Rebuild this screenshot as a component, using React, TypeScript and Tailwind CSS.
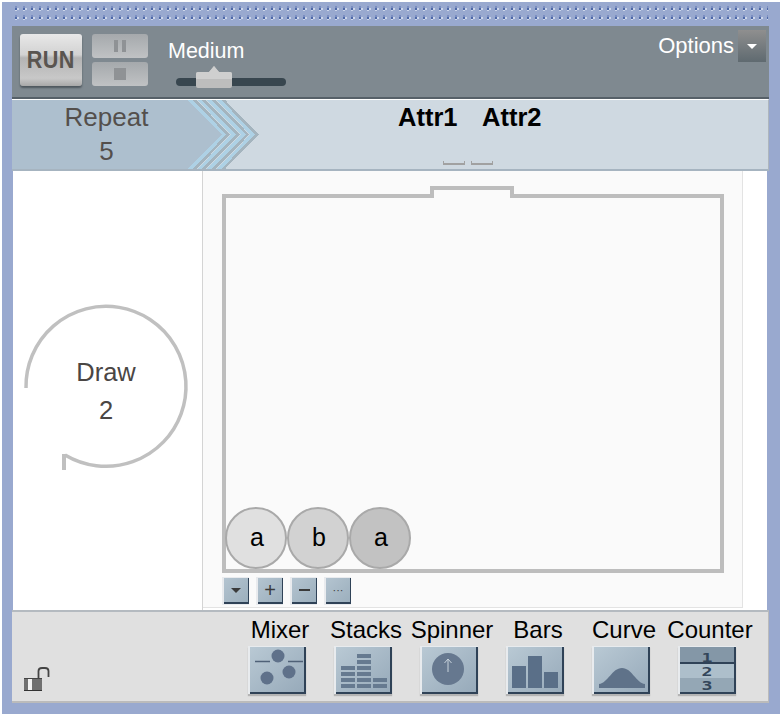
import type { ReactNode } from "react";

const FONT = { fontFamily: '"Liberation Sans", Arial, sans-serif' };
const MONO = { fontFamily: '"DejaVu Sans Mono", monospace' };

function IconTile({ children }: { children: ReactNode }) {
  return (
    <div className="w-[58px] h-[48px] bg-[#e8ebee] pl-[2px] pt-[1px] shadow-[0_2px_1px_#b4b4b4]">
      <div className="w-[56px] h-[47px] bg-gradient-to-br from-[#b9c9d4] to-[#97aaba] border-r-2 border-b-2 border-[#2f4257] overflow-hidden">
        {children}
      </div>
    </div>
  );
}

const tools: [string, ReactNode][] = [
  [
    "Mixer",
    <svg key="m" width="54" height="45" fill="#5f718a">
      <path d="M5 14.5H20M38 14.5H53" stroke="#4f6177" strokeWidth="1.5" />
      <circle cx="28" cy="9" r="6.5" />
      <circle cx="17" cy="31" r="6.5" />
      <circle cx="39" cy="25" r="6.5" />
    </svg>,
  ],
  [
    "Stacks",
    <svg key="s" width="54" height="45" fill="#667a90">
      {[
        [21, 7],
        [21, 13],
        [21, 19],
        [21, 25],
        [21, 31],
        [21, 37],
        [5, 19],
        [5, 25],
        [5, 31],
        [5, 37],
        [37, 31],
        [37, 37],
      ].map(([x, y]) => (
        <rect key={`${x}-${y}`} x={x} y={y} width="14" height="4" />
      ))}
    </svg>,
  ],
  [
    "Spinner",
    <svg key="p" width="54" height="45">
      <circle cx="26" cy="22" r="16" fill="#66788f" />
      <path d="M26 25V12M22.5 16L26 12L29.5 16" stroke="#c8d3dc" strokeWidth="1" fill="none" />
    </svg>,
  ],
  [
    "Bars",
    <svg key="b" width="54" height="45" fill="#5a6f88">
      <rect x="4" y="19" width="14" height="22" />
      <rect x="20" y="9" width="14" height="32" />
      <rect x="36" y="25" width="14" height="16" />
    </svg>,
  ],
  [
    "Curve",
    <svg key="c" width="54" height="45" fill="#5f7289">
      <path d="M5 41V37C14 36 18 21 28 21C38 21 42 36 51 37V41Z" />
    </svg>,
  ],
  [
    "Counter",
    <svg key="k" width="54" height="45" style={MONO}>
      <rect width="54" height="15" fill="#8497a7" />
      <rect y="17" width="54" height="14" fill="#adbfcb" />
      <rect y="31" width="54" height="14" fill="#94a7b5" />
      <text x="27" y="15" textAnchor="middle" fontSize="13" fontWeight="700" fill="#33465a" textLength="11" lengthAdjust="spacingAndGlyphs">1</text>
      <rect y="15" width="54" height="2" fill="#2f4257" />
      <text x="27" y="29" textAnchor="middle" fontSize="13" fontWeight="700" fill="#33465a" textLength="11" lengthAdjust="spacingAndGlyphs">2</text>
      <text x="27" y="43" textAnchor="middle" fontSize="13" fontWeight="700" fill="#33465a" textLength="11" lengthAdjust="spacingAndGlyphs">3</text>
    </svg>,
  ],
];

function MiniButton({ children }: { children: ReactNode }) {
  return (
    <div className="w-[27px] h-[28px] bg-[#e9ebee] pl-[2px] pt-[1px]">
      <div className="w-[25px] h-[26px] flex items-center justify-center bg-gradient-to-br from-[#b4c4d0] to-[#9cafbd] border-r border-b-2 border-[#2f4257]">
        {children}
      </div>
    </div>
  );
}

function Ball({ label, color }: { label: string; color: string }) {
  return (
    <div
      className="w-[62px] h-[62px] rounded-full border-2 border-[#a9a9a9] flex items-center justify-center pl-[2px] text-[25px] text-black shrink-0"
      style={{ backgroundColor: color }}
    >
      {label}
    </div>
  );
}

export default function App() {
  return (
    <div className="w-[782px] h-[716px] bg-white p-[2px]" style={FONT}>
      <div className="w-[778px] h-[712px] bg-[#99a9cf] flex flex-col">
        {/* dotted band */}
        <div className="h-[24px] pt-[4px] pl-[12px] flex flex-col gap-[3px] overflow-hidden">
          {[0, 1].map((r) => (
            <svg key={r} width="754" height="6" className="block" shapeRendering="crispEdges">
              <defs>
                <pattern id={`dots${r}`} width="8" height="6" patternUnits="userSpaceOnUse">
                  <rect x="1" y="0" width="2" height="2" fill="#7c8fc2" />
                  <rect x="1" y="2" width="2" height="2" fill="#4d68a8" />
                  <rect x="3" y="2" width="2" height="2" fill="#cdd6ea" />
                  <rect x="1" y="4" width="2" height="1" fill="#cdd6ea" />
                </pattern>
              </defs>
              <rect width="754" height="6" fill={`url(#dots${r})`} />
            </svg>
          ))}
        </div>

        <div className="ml-[10px] w-[757px] flex flex-col h-[677px]">
          {/* Control bar */}
          <div className="h-[73px] bg-[#7f8990] border-b-2 border-[#566068] flex shrink-0">
            <div className="ml-[8px] mt-[8px] w-[62px] h-[52px] rounded-[3px] bg-[linear-gradient(#e8e8e8_0%,#d2d2d2_40%,#b4b4b4_46%,#c8c8c8_85%,#a8a8a8_100%)] shadow-[0_2px_2px_#4f585e] flex items-center justify-center">
              <span className="text-[24px] font-bold text-[#5a5550] scale-x-90 tracking-[0.5px]">RUN</span>
            </div>
            <div className="ml-[10px] mt-[8px] flex flex-col gap-[4px]">
              <div className="w-[56px] h-[24px] rounded-[3px] bg-gradient-to-b from-[#a5a9ac] to-[#c0c2c4] flex items-center justify-center gap-[4px]">
                <div className="w-[4px] h-[12px] bg-[#8f9295]" />
                <div className="w-[4px] h-[12px] bg-[#8f9295]" />
              </div>
              <div className="w-[56px] h-[24px] rounded-[3px] bg-gradient-to-b from-[#a5a9ac] to-[#c0c2c4] flex items-center justify-center">
                <div className="w-[12px] h-[12px] bg-[#8f9295]" />
              </div>
            </div>
            <div className="ml-[20px] flex flex-col">
              <span className="text-[21.5px] leading-[24px] mt-[13px] text-white">Medium</span>
              <div className="relative w-[110px] h-[8px] ml-[8px] mt-[15px] rounded-full bg-[#38464f]">
                <svg className="absolute left-[20px] -top-[12px]" width="36" height="24">
                  <path d="M0 8Q0 6 2 6H13L18 0L23 6H34Q36 6 36 8V20Q36 22 34 22H2Q0 22 0 20Z" fill="#bdbdbd" />
                  <path d="M0 8Q0 6 2 6H13L18 0L23 6H34Q36 6 36 8V13H0Z" fill="#cfcfcf" />
                </svg>
              </div>
            </div>
            <div className="ml-auto mr-[3px] mt-[4px] flex items-start">
              <span className="text-[22px] leading-[26px] text-white mt-[3px]">Options</span>
              <div className="ml-[4px] w-[28px] h-[32px] bg-gradient-to-b from-[#8f8f8f] to-[#5f6a70] flex items-center justify-center">
                <div className="w-0 h-0 border-l-[5px] border-r-[5px] border-t-[5px] border-l-transparent border-r-transparent border-t-white" />
              </div>
            </div>
          </div>

          {/* Attribute bar */}
          <div className="h-[72px] border-t border-t-white bg-[#cfd9e1] border-b-2 border-b-[#a6b4c0] border-r border-r-[#aeb6bd] flex shrink-0 relative">
            <div className="w-[176px] h-full bg-[#adbfce] flex flex-col items-center text-[#544f4c] text-[26px] leading-[34px] pl-[13px]">
              <span>Repeat</span>
              <span>5</span>
            </div>
            <svg className="absolute left-[175px] top-0" width="76" height="69" fill="none" shapeRendering="crispEdges">
              <path d="M0 0H3L37 34L3 69H0Z" fill="#adbfce" />
              {[0, 1, 2, 3].map((k) => {
                const b = 2 + k * 9.6;
                const g = 6 + k * 9.6;
                return (
                  <g key={k}>
                    <path d={`M${g} -1L${g + 35} 34.5L${g} 70`} stroke="#a4b4be" strokeWidth="3.2" />
                    <path d={`M${b} -1L${b + 35} 34.5L${b} 70`} stroke="#aed1e5" strokeWidth="3.4" />
                  </g>
                );
              })}
            </svg>
            <span className="absolute left-[386px] top-[2px] text-[25.5px] leading-[30px] font-bold text-black">Attr1</span>
            <span className="absolute left-[470px] top-[2px] text-[25.5px] leading-[30px] font-bold text-black">Attr2</span>
            <div className="absolute left-[431px] top-[61px] w-[22px] h-[4px] border-b-2 border-l border-r border-[#a1a1a1]" />
            <div className="absolute left-[459px] top-[61px] w-[22px] h-[4px] border-b-2 border-l border-r border-[#a1a1a1]" />
          </div>

          {/* Main */}
          <div className="h-[439px] bg-white flex shrink-0 border-l border-r-2 border-[#99a9cf]">
            <div className="w-[190px] relative shrink-0 border-r border-[#d4d4d4]">
              <svg className="absolute left-[9px] top-[130px]" width="170" height="175" fill="none">
                <path d="M4 87A80 80 0 1 1 43 154" stroke="#c0c0c0" strokeWidth="3.5" />
                <path d="M42 153V169" stroke="#c0c0c0" strokeWidth="4" />
              </svg>
              <div className="absolute left-[51px] top-[183px] w-[84px] text-center text-[25.5px] leading-[37.5px] text-[#4a4644]">
                <div>Draw</div>
                <div>2</div>
              </div>
            </div>
            <div className="w-[540px] h-[437px] bg-[#fafafa] border-r border-b border-[#e3e3e3] pl-[19px] shrink-0 relative flex flex-col">
              <div className="mt-[23px] w-[502px] h-[379px] border-4 border-[#bdbdbd] flex items-end">
                <div className="flex -ml-[1px]">
                  <Ball label="a" color="#e0e0e0" />
                  <Ball label="b" color="#d2d2d2" />
                  <Ball label="a" color="#c2c2c2" />
                </div>
              </div>
              <svg className="absolute left-[227px] top-[15px]" width="84" height="12" fill="none">
                <path d="M4 4H80V12H4Z" fill="#fafafa" />
                <path d="M2 12V2H82V12" stroke="#bdbdbd" strokeWidth="4" />
              </svg>
              <div className="flex gap-[7px] mt-[4px]">
                <MiniButton>
                  <div className="w-0 h-0 border-l-[5px] border-r-[5px] border-t-[5px] border-l-transparent border-r-transparent border-t-[#3b3b3b]" />
                </MiniButton>
                <MiniButton>
                  <span className="text-[20px] leading-none text-[#3a3a3a]">+</span>
                </MiniButton>
                <MiniButton>
                  <span className="w-[11px] h-[2px] bg-[#3a3a3a]" />
                </MiniButton>
                <MiniButton>
                  <span className="text-[11px] leading-none text-[#3a3a3a]">···</span>
                </MiniButton>
              </div>
            </div>
            <div className="flex-1" />
          </div>

          {/* Tool shelf */}
          <div className="h-[93px] bg-[#e0e0e0] border-t-2 border-t-[#b4bac0] border-b-2 border-b-[#bbbbbb] border-r border-r-[#bbbbbb] relative shrink-0">
            <svg className="absolute left-[10px] top-[53px]" width="30" height="28" fill="none">
              <rect x="2" y="13" width="18" height="13" fill="#707070" />
              <rect x="2" y="25" width="18" height="1" fill="#333333" />
              <rect x="2" y="13" width="18" height="1" fill="#444444" />
              <rect x="6" y="14" width="4" height="11" fill="#f2f2f2" />
              <path d="M16.5 13V6Q16.5 3 20 3H23Q26.5 3 26.5 6V12" stroke="#444444" strokeWidth="1.8" />
            </svg>
            <div className="absolute left-[222px] top-[3px] flex">
              {tools.map(([name, icon]) => (
                <div key={name} className="w-[86px] flex flex-col items-center">
                  <span className="text-[24px] leading-[30px] text-black whitespace-nowrap pl-[6px]">{name}</span>
                  <div className="mt-[1px]">
                    <IconTile>{icon}</IconTile>
                  </div>
                </div>
              ))}
            </div>
          </div>
        </div>
      </div>
    </div>
  );
}
